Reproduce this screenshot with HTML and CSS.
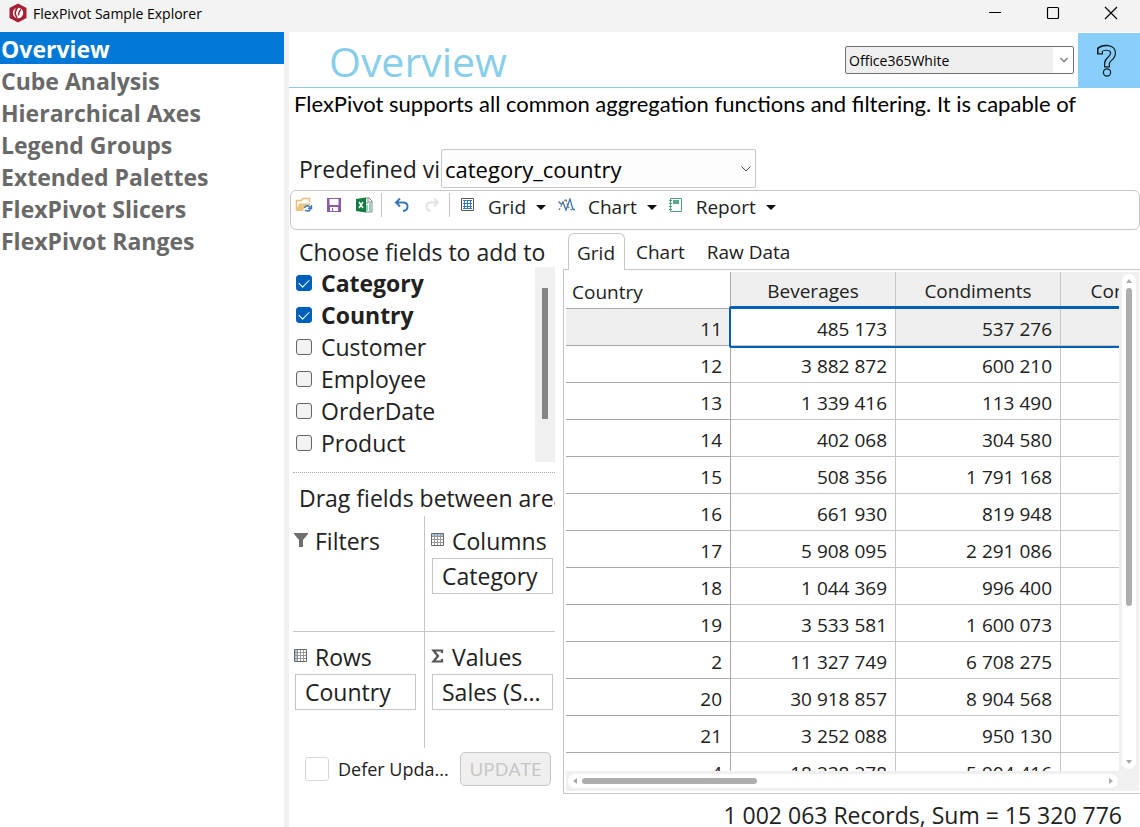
FILE: index.html
```html
<!DOCTYPE html>
<html lang="en">
<head>
<meta charset="utf-8">
<title>FlexPivot Sample Explorer</title>
<link rel="stylesheet" href="styles.css">
</head>
<body>
<div class="window">
  <header class="titlebar">
    <svg class="app-logo" width="18" height="20" viewBox="0 0 18 20"><path d="M9 0.500L17.500 5v10L9 19.500 0.500 15V5z" fill="#a51f35"/><circle cx="9" cy="10" r="5.200" fill="#fff"/><path d="M8.500 4.500C5.500 8 6 12 8 15" stroke="#a51f35" stroke-width="1.600" fill="none"/><path d="M12 6.500C10 8 9.500 10 9.500 12.500" stroke="#a51f35" stroke-width="1.300" fill="none"/></svg>
    <span class="app-title">FlexPivot Sample Explorer</span>
    <div class="caption-buttons">
      <button type="button" aria-label="Minimize"><svg width="14" height="14" viewBox="0 0 14 14"><path d="M1 6.500h12" stroke="#000"/></svg></button>
      <button type="button" aria-label="Maximize"><svg width="14" height="14" viewBox="0 0 14 14"><rect x="1.500" y="1.500" width="11" height="11" rx="1" fill="none" stroke="#000" stroke-width="1.200"/></svg></button>
      <button type="button" aria-label="Close"><svg width="14" height="14" viewBox="0 0 14 14"><path d="M1 1l12 12M13 1L1 13" stroke="#000" stroke-width="1.200"/></svg></button>
    </div>
  </header>
  <div class="workspace">
    <nav class="samples">
      <a class="sample current" href="#">Overview</a>
      <a class="sample" href="#">Cube Analysis</a>
      <a class="sample" href="#">Hierarchical Axes</a>
      <a class="sample" href="#">Legend Groups</a>
      <a class="sample" href="#">Extended Palettes</a>
      <a class="sample" href="#">FlexPivot Slicers</a>
      <a class="sample" href="#">FlexPivot Ranges</a>
    </nav>
    <main class="main">
      <div class="page-head">
        <h1 class="page-title">Overview</h1>
        <div class="select-box theme-box">
          <select class="theme-select" aria-label="Theme"><option>Office365White</option></select>
          <svg class="chevron" width="10" height="6" viewBox="0 0 10 6"><path d="M1.500 1L5 4.500 8.500 1" fill="none" stroke="#888" stroke-width="1.600"/></svg>
        </div>
        <button class="help" type="button" aria-label="Help">
          <svg width="22" height="34" viewBox="0 0 22 34"><path d="M4 10.500V5.500C8 2.500 17 3 17 9c0 6-6 5.500-6 10.500v4" fill="none" stroke="#101820" stroke-width="6"/><path d="M4 9.300V6C8 3 17 3 17 9c0 6-6 5.500-6 10.500v2.800" fill="none" stroke="#87cefa" stroke-width="3.600"/><path d="M2 4.500v5" stroke="#101820"/><circle cx="11" cy="28.500" r="3.600" fill="#87cefa" stroke="#101820" stroke-width="1.200"/></svg>
        </button>
      </div>
      <p class="description">FlexPivot supports all common aggregation functions and filtering. It is capable of</p>
      <div class="view-row">
        <label class="view-label" for="view">Predefined vi</label>
        <div class="select-box view-box">
          <select class="view-select" id="view"><option>category_country</option></select>
          <svg class="chevron" width="10" height="6" viewBox="0 0 10 6"><path d="M0.500 0.500L5 5l4.500-4.500" fill="none" stroke="#444"/></svg>
        </div>
      </div>
      <div class="toolbar">
        <button type="button" class="tool" aria-label="Open"><svg width="18" height="16" viewBox="0 0 18 16"><path d="M1.500 13V3.500h5l1.500-2h6.500V5" fill="none" stroke="#e8bd78" stroke-width="1.500"/><path d="M1 14L4 6.500h11.500L14 9c-3-1-5 1-6 5z" fill="#edc382"/><path d="M9.500 11c1-3 5-3 6 0M16.500 8v3.500H13M15.500 12.500c-1 2-4 2-5.500 0.500" fill="none" stroke="#3b76b8" stroke-width="1.400"/></svg></button>
        <button type="button" class="tool" aria-label="Save"><svg width="14" height="14" viewBox="0 0 14 14"><path d="M0 0h14v14H0z" fill="#8a5bab"/><path d="M2.500 1h9v6h-9zM3 9h8v4H6v-3H5v3H3z" fill="#fff"/></svg></button>
        <button type="button" class="tool" aria-label="Export to Excel"><svg width="17" height="16" viewBox="0 0 17 16"><path d="M9 1h4l3 3v11H9" fill="#fff" stroke="#888"/><path d="M12 1v4h4" fill="none" stroke="#888"/><path d="M10 6h2M13 7h2M10 9h2M13 9h2M10 11h2M13 11h2M10 13h2M13 13h2" stroke="#21a366"/><path d="M0 2l10-1.500v15L0 14z" fill="#107c41"/><path d="M3 5l4 6M7 5l-4 6" stroke="#fff" stroke-width="1.500"/></svg></button>
        <span class="separator"></span>
        <button type="button" class="tool" aria-label="Undo"><svg width="16" height="14" viewBox="0 0 16 14"><path d="M6 0.500L2 4.500l4 4M2 4.500h7c6 0 6 8 0 8.500" fill="none" stroke="#3b76b8" stroke-width="2"/></svg></button>
        <button type="button" class="tool" aria-label="Redo" disabled><svg width="16" height="14" viewBox="0 0 16 14"><path d="M10 0.500l4 4-4 4M14 4.500H7c-6 0-6 8 0 8.500" fill="none" stroke="#e2e2e2" stroke-width="2"/></svg></button>
        <span class="separator"></span>
        <button type="button" class="tool menu"><svg width="14" height="14" viewBox="0 0 14 14"><path d="M0.500 0.500h12v12H0.500z" fill="#fff" stroke="#555"/><path d="M2 2.500h9M2 5.500h9M2 8.500h9M2 10.500h9M3.500 2v9M6.500 2v9M9.500 2v9" stroke="#3b76b8"/></svg><span>Grid</span><i class="caret"></i></button>
        <button type="button" class="tool menu"><svg width="17" height="14" viewBox="0 0 17 14"><path d="M0.500 3.500l3 3L5 4l3 8 4-11 3 10.500h2" fill="none" stroke="#3b76b8" stroke-width="1.300"/><path d="M1 12l4-7 3-4 2 8 4 3" fill="none" stroke="#777" stroke-width="1.300" stroke-dasharray="2 1.500"/></svg><span>Chart</span><i class="caret"></i></button>
        <button type="button" class="tool menu"><svg width="14" height="14" viewBox="0 0 14 14"><path d="M1.500 0.500h11v13h-11z" fill="#fff" stroke="#4f9b83"/><path d="M4 2h6v4H4z" fill="#5aa58d"/><path d="M0 2.500h3M0 5.500h3M0 8.500h3M0 11.500h3" stroke="#4f9b83"/></svg><span>Report</span><i class="caret"></i></button>
      </div>
      <div class="content">
        <section class="fields">
          <h2 class="panel-title">Choose fields to add to</h2>
          <div class="field-list">
            <div class="field-items">
              <label class="field checked"><input type="checkbox" checked><span>Category</span></label>
              <label class="field checked"><input type="checkbox" checked><span>Country</span></label>
              <label class="field"><input type="checkbox"><span>Customer</span></label>
              <label class="field"><input type="checkbox"><span>Employee</span></label>
              <label class="field"><input type="checkbox"><span>OrderDate</span></label>
              <label class="field"><input type="checkbox"><span>Product</span></label>
            </div>
            <div class="list-scroll"><div class="list-thumb"></div></div>
          </div>
          <h2 class="panel-title drag-title">Drag fields between area</h2>
          <div class="areas">
            <div class="area">
              <h3 class="area-title"><svg width="14" height="14" viewBox="0 0 14 14"><path d="M0 0h14v1L9 7v7H5V7L0 1z" fill="#707070"/></svg>Filters</h3>
            </div>
            <div class="area">
              <h3 class="area-title"><svg width="14" height="14" viewBox="0 0 14 14"><path d="M0.500 0.500h12v12H0.500z" fill="#fff" stroke="#666"/><path d="M1 1h11v2H1z" fill="#a9c6e4"/><path d="M1 3.500h11M1 6.500h11M1 9.500h11M3.500 1v11M6.500 1v11M9.500 1v11" stroke="#999"/></svg>Columns</h3>
              <button type="button" class="chip">Category</button>
            </div>
            <div class="area">
              <h3 class="area-title"><svg width="14" height="14" viewBox="0 0 14 14"><path d="M0.500 0.500h12v12H0.500z" fill="#fff" stroke="#666"/><path d="M1 1h3v11H1z" fill="#a9c6e4"/><path d="M1 3.500h11M1 6.500h11M1 9.500h11M3.500 1v11M6.500 1v11M9.500 1v11" stroke="#999"/></svg>Rows</h3>
              <button type="button" class="chip">Country</button>
            </div>
            <div class="area">
              <h3 class="area-title"><svg width="14" height="14" viewBox="0 0 14 14"><path d="M11 4V1.500H2.500L7 7l-4.500 5.500H11V10" fill="none" stroke="#555" stroke-width="2.200"/></svg>Values</h3>
              <button type="button" class="chip">Sales (S...</button>
            </div>
          </div>
          <div class="defer-row">
            <label class="defer"><input type="checkbox"><span>Defer Upda...</span></label>
            <button type="button" class="update" disabled>UPDATE</button>
          </div>
        </section>
        <section class="output">
          <div class="tabs" role="tablist">
            <button type="button" class="tab active" role="tab">Grid</button>
            <button type="button" class="tab" role="tab">Chart</button>
            <button type="button" class="tab" role="tab">Raw Data</button>
          </div>
          <div class="grid-panel">
            <div class="grid-view">
              <table class="pivot">
                <thead><tr><th>Country</th><th>Beverages</th><th>Condiments</th><th>Confections</th></tr></thead>
                <tbody>
                  <tr class="selected"><th>11</th><td class="active-cell">485 173</td><td>537 276</td><td></td></tr>
                  <tr><th>12</th><td>3 882 872</td><td>600 210</td><td></td></tr>
                  <tr><th>13</th><td>1 339 416</td><td>113 490</td><td></td></tr>
                  <tr><th>14</th><td>402 068</td><td>304 580</td><td></td></tr>
                  <tr><th>15</th><td>508 356</td><td>1 791 168</td><td></td></tr>
                  <tr><th>16</th><td>661 930</td><td>819 948</td><td></td></tr>
                  <tr><th>17</th><td>5 908 095</td><td>2 291 086</td><td></td></tr>
                  <tr><th>18</th><td>1 044 369</td><td>996 400</td><td></td></tr>
                  <tr><th>19</th><td>3 533 581</td><td>1 600 073</td><td></td></tr>
                  <tr><th>2</th><td>11 327 749</td><td>6 708 275</td><td></td></tr>
                  <tr><th>20</th><td>30 918 857</td><td>8 904 568</td><td></td></tr>
                  <tr><th>21</th><td>3 252 088</td><td>950 130</td><td></td></tr>
                  <tr><th>4</th><td>18 238 278</td><td>5 904 416</td><td></td></tr>
                </tbody>
              </table>
              <div class="selection"></div>
            </div>
            <div class="vscroll"><div class="track"><i class="arrow up"></i><div class="thumb"></div><i class="arrow down"></i></div></div>
            <div class="hscroll"><div class="track"><i class="arrow left"></i><div class="thumb"></div><i class="arrow right"></i></div></div>
            <div class="corner"></div>
          </div>
        </section>
      </div>
      <footer class="status">1 002 063 Records, Sum = 15 320 776</footer>
    </main>
  </div>
</div>
</body>
</html>
```

FILE: styles.css
```css
* { box-sizing: border-box; }
body {
  margin: 0;
  font-family: "Open Sans", "Noto Sans", sans-serif;
  color: #212121;
  background: #fff;
}
button, select { font: inherit; color: inherit; }
button { padding: 0; border: 0; background: none; }
svg { display: block; flex: none; }
h1, h2, h3, p { margin: 0; font-weight: 400; }

.window { display: flex; flex-direction: column; height: 100vh; overflow: hidden; }

.titlebar { display: flex; align-items: center; flex: none; height: 32px; padding-left: 9px; background: #f3f3f3; }
.app-logo { margin-bottom: 6px; }
.app-title { margin: 0 auto 6px 6px; font-size: 14px; color: #000; }
.caption-buttons { display: flex; height: 26px; margin-bottom: 6px; }
.caption-buttons button { display: grid; place-items: center; width: 58px; }

.workspace { display: flex; flex: 1; min-height: 0; }
.samples { flex: none; width: 289px; border-right: 5px solid #f0f0f0; }
.sample {
  display: block;
  height: 32px;
  padding-left: 1px;
  font-size: 23px;
  line-height: 34px;
  font-weight: 700;
  color: #696969;
  text-decoration: none;
  white-space: nowrap;
}
.sample.current { color: #fff; background: #0078d7; }

.main { display: flex; flex-direction: column; flex: 1; min-width: 0; }
.page-head { display: flex; align-items: center; flex: none; height: 56px; padding-top: 1px; border-bottom: 1px solid #87ceeb; }
.page-title { margin: 0 auto 0 40px; padding-top: 2px; font-size: 41px; line-height: 52px; color: #87ceeb; }
.select-box { position: relative; }
.select-box select { width: 100%; height: 100%; appearance: none; border-radius: 2px; }
.chevron { position: absolute; top: 50%; right: 5px; margin-top: -3px; pointer-events: none; }
.theme-box { width: 229px; height: 28px; margin-right: 4px; }
.theme-select {
  padding: 0 3px;
  font-size: 14px;
  color: #000;
  border: 1px solid #707070;
  background: linear-gradient(to left, #fff 20px, #efefef 20px);
}
.help { display: grid; place-items: center; align-self: stretch; width: 62px; padding: 2px 4px 0 0; background: #87cefa; }

.description {
  flex: none;
  height: 61px;
  padding-left: 5px;
  font-family: Lato, "Open Sans", sans-serif;
  font-size: 22px;
  line-height: 32px;
  color: #000;
  white-space: nowrap;
}

.view-row { display: flex; align-items: center; flex: none; height: 39px; padding-left: 10px; }
.view-label { width: 142px; overflow: hidden; font-size: 23px; white-space: nowrap; }
.view-box { width: 315px; height: 39px; }
.view-select { padding: 0 3px; font-size: 22px; color: #000; border: 1px solid #c8c8c8; background: #fdfdfd; }

.toolbar {
  display: flex;
  align-items: center;
  gap: 12px;
  flex: none;
  height: 40px;
  margin: 2px 0 0 1px;
  padding: 0 4px 10px;
  border: 1px solid #c6c6c6;
  border-radius: 6px;
}
.tool { display: flex; align-items: center; justify-content: center; flex: none; width: 18px; }
.separator { width: 1px; height: 24px; margin: 0 -1px 0 -4px; background: #c6c6c6; }
.menu { width: auto; font-size: 19px; }
.menu span { margin: 4px 10px 0 13px; line-height: 24px; }
.caret { margin-top: 4px; border: 5px solid transparent; border-top-color: #111; border-bottom: 0; }

.content { display: flex; flex: none; gap: 8px; }
.fields { flex: none; width: 266px; padding: 7px 0 0 4px; }
.panel-title { height: 30px; padding-left: 6px; overflow: hidden; font-size: 23px; line-height: 30px; white-space: nowrap; }
.field-list { display: flex; height: 195px; }
.field-items { flex: 1; }
.field { display: flex; gap: 9px; padding-left: 3px; font-size: 23px; line-height: 32px; }
.field.checked { font-weight: 700; }
.field input, .defer input { flex: none; appearance: none; margin: 0; border: 1px solid #666; border-radius: 3px; background: #f3f3f3; }
.field input { display: grid; place-items: center; width: 16px; height: 16px; margin-top: 8px; }
.field input:checked { border-color: #005fb8; background: #005fb8; }
.field input:checked::after { content: ""; width: 9px; height: 5px; margin-bottom: 2px; border: solid #fff; border-width: 0 0 1px 1px; transform: rotate(-45deg); }
.list-scroll { width: 20px; padding: 21px 7px 0; background: #f0f0f0; }
.list-thumb { height: 131px; background: #858585; }
.drag-title { height: 41px; margin-top: 10px; padding-top: 10px; border-top: 1px dotted #aaa; }

.areas { display: grid; grid-template-columns: 132px 1fr; grid-template-rows: 116px 116px; margin-top: 3px; }
.area { padding: 9px 2px 0; }
.area:nth-child(odd) { padding-right: 8px; border-right: 1px solid #c6c6c6; }
.area:nth-child(even) { padding-left: 7px; }
.area:nth-child(-n+2) { border-bottom: 1px solid #c6c6c6; }
.area-title { display: flex; align-items: center; gap: 7px; height: 33px; padding-bottom: 2px; margin-left: -1px; font-size: 23px; line-height: 30px; }
.area-title svg { margin-bottom: 2px; }
.chip { width: 100%; height: 36px; padding: 0 9px; font-size: 23px; line-height: 34px; text-align: left; border: 1px solid #c6c6c6; background: #fff; }

.defer-row { display: flex; align-items: center; justify-content: space-between; margin-top: 4px; padding: 0 4px 0 12px; white-space: nowrap; }
.defer { display: flex; align-items: center; gap: 9px; font-size: 18px; }
.defer input { width: 24px; height: 24px; border-color: #d8d8d8; background: #fff; }
.update { width: 91px; height: 34px; font-size: 19px; color: #c4c4c4; border: 1px solid #c6c6c6; border-radius: 5px; background: #efefef; }

.output { flex: 1; min-width: 0; padding-top: 3px; }
.tabs { display: flex; padding-left: 5px; }
.tab { height: 36px; padding: 2px 9px 0 8px; font-size: 19px; border: 1px solid transparent; }
.tab + .tab { padding: 2px 10px 0 10px; }
.tab.active { position: relative; z-index: 1; height: 37px; margin-bottom: -1px; border-color: #c6c6c6; border-bottom: 0; border-radius: 6px 6px 0 0; background: #fff; }
.grid-panel { display: grid; grid-template-columns: 1fr 20px; grid-template-rows: 499px 20px; padding: 2px 1px 2px 2px; border: 1px solid #c6c6c6; border-right: 0; }
.grid-view { position: relative; overflow: hidden; }
.pivot { width: 660px; table-layout: fixed; border-spacing: 0; font-size: 19px; line-height: 26px; }
.pivot th, .pivot td { height: 37px; padding: 4px 8px 0; border: solid #c6c6c6; border-width: 0 1px 1px 0; font-weight: 400; text-align: right; }
.pivot th { border-color: #a8a8a8; }
.pivot thead th { padding-top: 2px; text-align: center; border-right-color: #c6c6c6; background: #efefef; }
.pivot thead th:first-child { padding: 4px 6px 0; text-align: left; border-color: #a8a8a8; background: #fff; }
.pivot .selected th, .pivot .selected td { background: #efefef; }
.pivot .selected .active-cell { background: #fff; }
.selection { position: absolute; top: 34px; left: 163px; right: -4px; height: 42px; border: solid #005fb8; border-width: 3px 2px 2px; border-radius: 2px; }

.vscroll, .hscroll, .corner { background: #f0f0f0; }
.vscroll { padding: 2px 3px 2px 3px; }
.hscroll { padding: 3px 1px 3px 2px; }
.track { display: flex; align-items: center; height: 100%; border-radius: 7px; background: #fff; }
.vscroll .track { flex-direction: column; }
.vscroll .thumb { width: 6px; height: 318px; margin: 5px 0 auto; border-radius: 3px; background: #aeaeae; }
.hscroll .thumb { width: 175px; height: 6px; margin: 0 auto 0 5px; border-radius: 3px; background: #aeaeae; }
.arrow { border: 3px solid transparent; }
.up { margin-top: 5px; border-top: 0; border-bottom: 4px solid #aaa; }
.down { margin-bottom: 5px; border-bottom: 0; border-top: 4px solid #aaa; }
.left { margin-left: 5px; border-left: 0; border-right: 4px solid #aaa; }
.right { margin-right: 5px; border-right: 0; border-left: 4px solid #aaa; }

.status { padding: 5px 18px 0 0; font-size: 23px; line-height: 32px; text-align: right; white-space: nowrap; }
```
